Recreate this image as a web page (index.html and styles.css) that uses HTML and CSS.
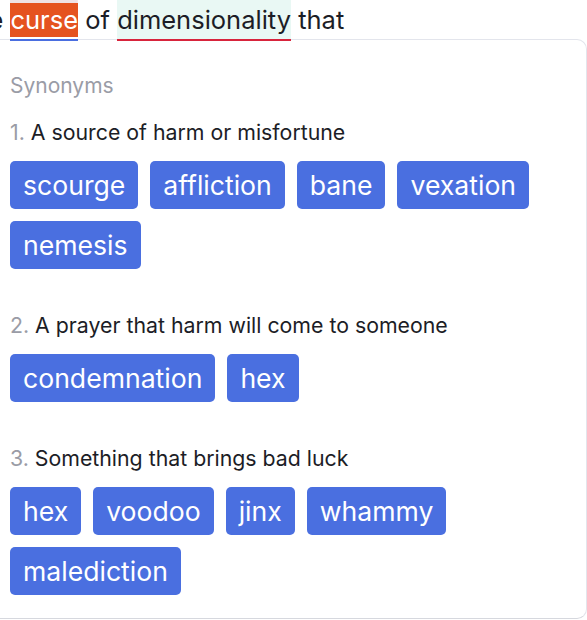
FILE: index.html
```html
<!DOCTYPE html>
<html>
<head>
<meta charset="utf-8">
<link rel="stylesheet" href="styles.css">
</head>
<body>
<div class="page">
  <div class="sentence"><span class="pre">the</span> <span class="hl-curse"><span class="sel">curse</span></span> of <span class="hl-dim">dimensionality</span> that</div>
  <div class="card">
    <div class="title">Synonyms</div>
    <section class="group">
      <div class="def"><span class="num">1.</span> A source of harm or misfortune</div>
      <div class="chips">
        <span class="chip">scourge</span>
        <span class="chip">affliction</span>
        <span class="chip">bane</span>
        <span class="chip">vexation</span>
        <span class="chip">nemesis</span>
      </div>
    </section>
    <section class="group">
      <div class="def"><span class="num">2.</span> A prayer that harm will come to someone</div>
      <div class="chips">
        <span class="chip">condemnation</span>
        <span class="chip">hex</span>
      </div>
    </section>
    <section class="group">
      <div class="def"><span class="num">3.</span> Something that brings bad luck</div>
      <div class="chips">
        <span class="chip">hex</span>
        <span class="chip">voodoo</span>
        <span class="chip">jinx</span>
        <span class="chip">whammy</span>
        <span class="chip">malediction</span>
      </div>
    </section>
  </div>
</div>
</body>
</html>
```
FILE: styles.css
```css
* { box-sizing: border-box; }
html, body { margin: 0; padding: 0; background: #ffffff; }
body {
  font-family: Inter, "Noto Sans", sans-serif;
  color: #1c1d26;
  overflow: hidden;
  width: 587px;
  height: 620px;
}
.page {
  margin-left: -35px;
  width: 622px;
}
.sentence {
  position: relative;
  z-index: 1;
  font-size: 25.5px;
  line-height: 40px;
  height: 41px;
  white-space: nowrap;
}
.hl-curse, .hl-dim {
  display: inline-block;
  height: 41px;
  vertical-align: top;
}
.hl-curse {
  background: linear-gradient(#efe2e5, #efe2e5) top / 100% 3px no-repeat;
  border-bottom: 2px solid #4a6ee0;
}
.sel {
  display: inline-block;
  margin-top: 3px;
  height: 34px;
  line-height: 34px;
  background: #e5531f;
  color: #ffffff;
}
.hl-dim {
  background: #e9f8f4;
  border-bottom: 2px solid #d8243c;
}
.card {
  margin-top: -2px;
  border: 1px solid #e3e5ec;
  border-bottom-color: #d6d8de;
  border-radius: 10px;
  height: 580px;
  padding: 32px 0 0 44px;
}
.title {
  font-size: 21px;
  line-height: 28px;
  color: #9a9ca6;
  margin-bottom: 18px;
}
.group { margin-bottom: 42px; }
.def {
  font-size: 21.3px;
  line-height: 28px;
  margin-bottom: 15px;
}
.num { color: #9a9ca6; }
.chips {
  display: flex;
  flex-wrap: wrap;
  gap: 12px;
}
.chip {
  background: #4a6fe0;
  color: #ffffff;
  font-size: 26.6px;
  line-height: 32px;
  padding: 8px 13px;
  border-radius: 5px;
}
```
